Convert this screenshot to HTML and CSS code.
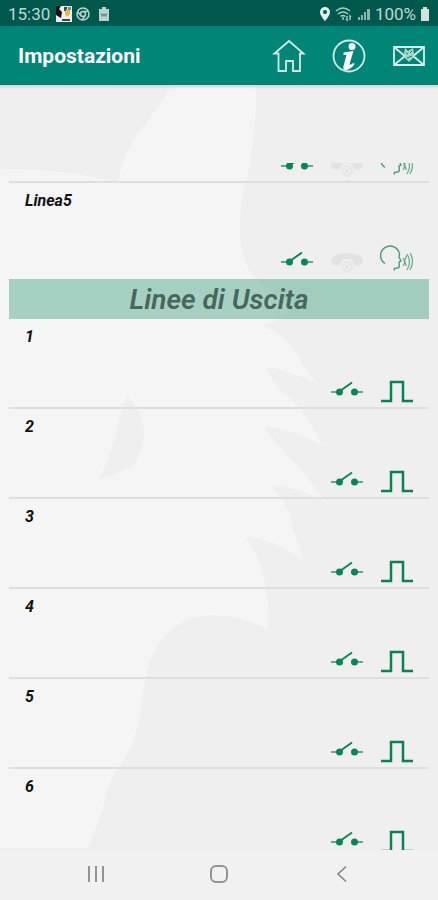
FILE: index.html
```html
<!DOCTYPE html>
<html lang="it">
<head>
<meta charset="utf-8">
<meta name="viewport" content="width=device-width, initial-scale=1">
<title>Impostazioni</title>
<link rel="stylesheet" href="styles.css">
</head>
<body>
<svg class="defs" width="0" height="0" aria-hidden="true">
  <symbol id="switch" viewBox="0 0 34 32">
    <path d="M1 20H8M26 20H33" stroke="#62a78b" stroke-width="2"/>
    <path d="M10 19L22 10.500" stroke="#078657" stroke-width="2"/>
    <circle cx="9.500" cy="20" r="3.500" fill="#078657"/><circle cx="24.500" cy="20" r="3.500" fill="#078657"/>
  </symbol>
  <symbol id="phone" viewBox="0 0 34 32">
    <path d="M1 20C1 14 8 11 17 11s16 3 16 9c0 4-9 5-10 1 0-3-2-4-6-4s-6 1-6 4c-1 4-10 3-10-1z" fill="#e2e2e2"/>
    <circle cx="17" cy="25" r="5" fill="#eee" stroke="#dedede"/>
    <path d="M14 28l6-6M15 22l4 6" stroke="#dedede" fill="none"/>
  </symbol>
  <symbol id="voice" viewBox="0 0 34 32">
    <path d="M5 21.500A9.500 9.500 0 1 1 19.500 12l-.5 3 2 4-2 1 .3 4q0 2-2 2l-3 .5v2" fill="none" stroke="#459d7a" stroke-width="1.400"/>
    <path d="M23 16q3 4 0 8M26.500 13.500l-2 5.500 2 5M27 12q5 8 0 16M30 11q5 8 0 17" fill="none" stroke="#62a98c" stroke-width="1.200"/>
  </symbol>
  <symbol id="pulse" viewBox="0 0 34 32">
    <path d="M1 29H11V10H23V29H33" fill="none" stroke="#078351" stroke-width="2.500"/>
  </symbol>
</svg>

<div class="status">
  <span class="time">15:30</span>
  <svg width="16" height="16" viewBox="0 0 16 16"><path fill="#eee" d="M0 0h16v16H0z"/><path fill="#111" d="M0 0h5l-2 3 3 3-1 6-5-3z"/><path fill="#444" d="M8 1h3v4H8zM6 13h8v2H6z"/><path fill="#e5b640" d="M10 3l4 1v4l-3 3-2-3z"/><path fill="#5a8ec0" d="M12 1h3v3h-3z"/></svg>
  <svg width="14" height="16" viewBox="0 0 14 16" fill="none" stroke="#b7d3cc" stroke-width="1.500"><circle cx="7" cy="8" r="6"/><circle cx="7" cy="8" r="2.500"/><path d="M7 5.500h5M5 10L2 6M9 10l-3 4"/></svg>
  <svg class="battery-saver" width="12" height="16" viewBox="0 0 12 16"><path fill="#b7d3cc" d="M4 1h4v2h3v12H1V3h3z"/><path stroke="#6f978f" stroke-width="3" d="M3 9h6"/></svg>
  <span class="spacer"></span>
  <svg width="12" height="16" viewBox="0 0 12 16"><path fill="#e0efeb" fill-rule="evenodd" d="M6 1a5 5 0 0 0-5 5c0 4 5 9 5 9s5-5 5-9a5 5 0 0 0-5-5zm0 3a2 2 0 1 1 0 4 2 2 0 0 1 0-4z"/></svg>
  <svg width="18" height="16" viewBox="0 0 18 16" fill="none" stroke="#a9c9c2" stroke-width="1.500"><path d="M1 5q7-6 14 0M3 8q5-4 10 0M5.500 10.500q2.500-2 5 0"/><path d="M8 11v3M12 10v4l-1-1M15 14v-4l1 1"/></svg>
  <svg width="14" height="16" viewBox="0 0 14 16"><path fill="#8bb5ac" d="M1 11h2v3H1zM4 9h2v5H4zM7 6h2v8H7zM10 3h3v11h-3z"/></svg>
  <span class="percent">100%</span>
  <svg width="10" height="16" viewBox="0 0 10 16"><path fill="#cfe2dd" d="M3 1h4v2h2v12H1V3h2z"/></svg>
</div>

<header class="appbar">
  <h1>Impostazioni</h1>
  <button aria-label="Home"><svg width="34" height="36" viewBox="0 0 34 36"><path d="M2.500 15.500L17 3l14.500 12.500H28V33h-7V23h-7v10H6.500V15.500z" fill="none" stroke="#d3ebe6" stroke-width="1.800"/></svg></button>
  <button aria-label="Informazioni"><svg width="34" height="36" viewBox="0 0 34 36"><circle cx="17" cy="18" r="15.500" fill="none" stroke="#d3ebe6" stroke-width="1.800"/><circle cx="20" cy="8.500" r="3.500" fill="#fff"/><path d="M11.500 14.500l10-1.500-4 13q0 2 4-1l1 1c-3 6-13 9-11 2l3-11h-3z" fill="#fff"/></svg></button>
  <button aria-label="Messaggi"><svg width="34" height="36" viewBox="0 0 34 36"><path d="M2 9h30v18H2zM2 9l12 10M32 9L20 19M2 27l11-9M32 27l-11-9" fill="none" stroke="#d9eee9" stroke-width="1.800"/><path d="M13 10l3 3 5-3 1 6-1 4-4 4-4-4-1-4z" fill="#a8d6cb"/><path d="M14 15l2 1M18 15l2-2M15 20l5-2" stroke="#087e6d"/></svg></button>
</header>

<main>
  <svg class="backdrop" viewBox="0 0 438 765" preserveAspectRatio="xMidYMin slice" aria-hidden="true">
    <path fill="#f5f5f5" d="M172 0H256Q256 60 246 96C237 130 238 165 249 185Q262 202 290 218Q292 233 262 240Q287 252 295 266Q304 284 317 298Q286 284 266 282Q274 304 292 314Q308 332 322 360Q287 342 265 342Q275 360 299 382Q312 400 328 418Q300 402 270 400Q290 418 292 442Q298 456 303 475Q270 452 245 452Q264 478 266 505Q270 525 268 545C240 527 205 529 188 534C153 552 147 580 142 616Q137 655 122 677Q105 700 103 724L88 763H0V84Q70 84 118 98Q125 60 145 40Q160 20 172 0z"/>
    <path fill="#efefef" d="M128 312C150 335 146 360 135 378Q118 390 99 394C112 370 118 345 122 320z"/>
  </svg>
  <div class="viewport">
    <ul class="list">
      <li class="row input"><div class="actions"><button aria-label="Contatto"><svg><use href="#switch"/></svg></button><button aria-label="Telefono"><svg><use href="#phone"/></svg></button><button aria-label="Voce"><svg><use href="#voice"/></svg></button></div></li>
      <li class="row input last"><span>Linea5</span><div class="actions"><button aria-label="Contatto"><svg><use href="#switch"/></svg></button><button aria-label="Telefono"><svg><use href="#phone"/></svg></button><button aria-label="Voce"><svg><use href="#voice"/></svg></button></div></li>
    </ul>
    <h2>Linee di Uscita</h2>
    <ul>
      <li class="row"><span>1</span><div class="actions"><button aria-label="Contatto"><svg><use href="#switch"/></svg></button><button aria-label="Impulso"><svg><use href="#pulse"/></svg></button></div></li>
      <li class="row"><span>2</span><div class="actions"><button aria-label="Contatto"><svg><use href="#switch"/></svg></button><button aria-label="Impulso"><svg><use href="#pulse"/></svg></button></div></li>
      <li class="row"><span>3</span><div class="actions"><button aria-label="Contatto"><svg><use href="#switch"/></svg></button><button aria-label="Impulso"><svg><use href="#pulse"/></svg></button></div></li>
      <li class="row"><span>4</span><div class="actions"><button aria-label="Contatto"><svg><use href="#switch"/></svg></button><button aria-label="Impulso"><svg><use href="#pulse"/></svg></button></div></li>
      <li class="row"><span>5</span><div class="actions"><button aria-label="Contatto"><svg><use href="#switch"/></svg></button><button aria-label="Impulso"><svg><use href="#pulse"/></svg></button></div></li>
      <li class="row"><span>6</span><div class="actions"><button aria-label="Contatto"><svg><use href="#switch"/></svg></button><button aria-label="Impulso"><svg><use href="#pulse"/></svg></button></div></li>
    </ul>
  </div>
</main>

<nav class="system">
  <button aria-label="Recenti"><svg width="20" height="20" viewBox="0 0 20 20" stroke="#929292" stroke-width="2"><path d="M3 2v16M10 2v16M17 2v16"/></svg></button>
  <button aria-label="Schermata Home"><svg width="20" height="20" viewBox="0 0 20 20"><rect x="2" y="2" width="16" height="16" rx="5" fill="none" stroke="#929292" stroke-width="2"/></svg></button>
  <button aria-label="Indietro"><svg width="20" height="20" viewBox="0 0 20 20"><path d="M14 2.500L6 10l8 7.500" fill="none" stroke="#858585" stroke-width="1.600"/></svg></button>
</nav>
</body>
</html>
```
FILE: styles.css
```css
* { box-sizing: border-box; }

body {
  margin: 0;
  height: 100vh;
  display: flex;
  flex-direction: column;
  background: #efefef;
  font-family: Roboto, sans-serif;
}

.defs { position: absolute; }

button {
  display: flex;
  align-items: center;
  justify-content: center;
  padding: 0;
  border: 0;
  background: none;
}

.status {
  flex: 0 0 26px;
  display: flex;
  align-items: center;
  gap: 4px;
  padding: 2px 8px 0;
  background: #00574b;
  color: #bfd8d2;
  font-size: 17px;
}

.time { margin-right: 2px; }
.battery-saver { margin-left: 4px; }
.spacer { flex: 1; }

.appbar {
  flex: 0 0 59px;
  display: flex;
  align-items: center;
  gap: 26px;
  padding: 1px 12px 0 18px;
  background: #008577;
  color: #fff;
}

.appbar h1 {
  flex: 1;
  margin: 0;
  font-size: 21px;
  font-weight: 700;
}

main {
  flex: 1;
  min-height: 0;
  position: relative;
  display: flex;
  flex-direction: column;
  padding: 78px 9px 0;
}

main::before {
  content: "";
  position: absolute;
  top: 0;
  left: 0;
  right: 0;
  height: 4px;
  background: linear-gradient(#d0d4d3, transparent);
}

.backdrop {
  position: absolute;
  top: 0;
  left: 0;
  z-index: -1;
  width: 100%;
  height: 100%;
}

.viewport {
  flex: 1;
  min-height: 0;
  overflow: hidden;
}

ul {
  margin: 0;
  padding: 0;
  list-style: none;
}

/* The list is scrolled: only the foot of the first row shows. */
.list { margin-top: -76px; }

.row {
  display: flex;
  height: 90px;
  padding: 8px 15px 0 16px;
  border-bottom: 2px solid #dedede;
  font-size: 16px;
  line-height: 20px;
  font-weight: 700;
  font-style: italic;
  color: #111;
}

.row.input { height: 96px; }
.row.last { border-color: transparent; }

.actions {
  display: flex;
  align-items: flex-end;
  gap: 16px;
  margin-left: auto;
  padding-bottom: 3px;
}

.actions svg {
  display: block;
  width: 34px;
  height: 32px;
}

h2 {
  margin: 0;
  padding-top: 2px;
  background: rgba(0, 133, 87, 0.32);
  color: #47675e;
  font-size: 28px;
  line-height: 38px;
  font-weight: 600;
  font-style: italic;
  text-align: center;
}

.system {
  flex: 0 0 50px;
  display: flex;
  align-items: center;
  justify-content: center;
  gap: 103px;
  padding-bottom: 2px;
  background: #f1f1f1;
}
```
